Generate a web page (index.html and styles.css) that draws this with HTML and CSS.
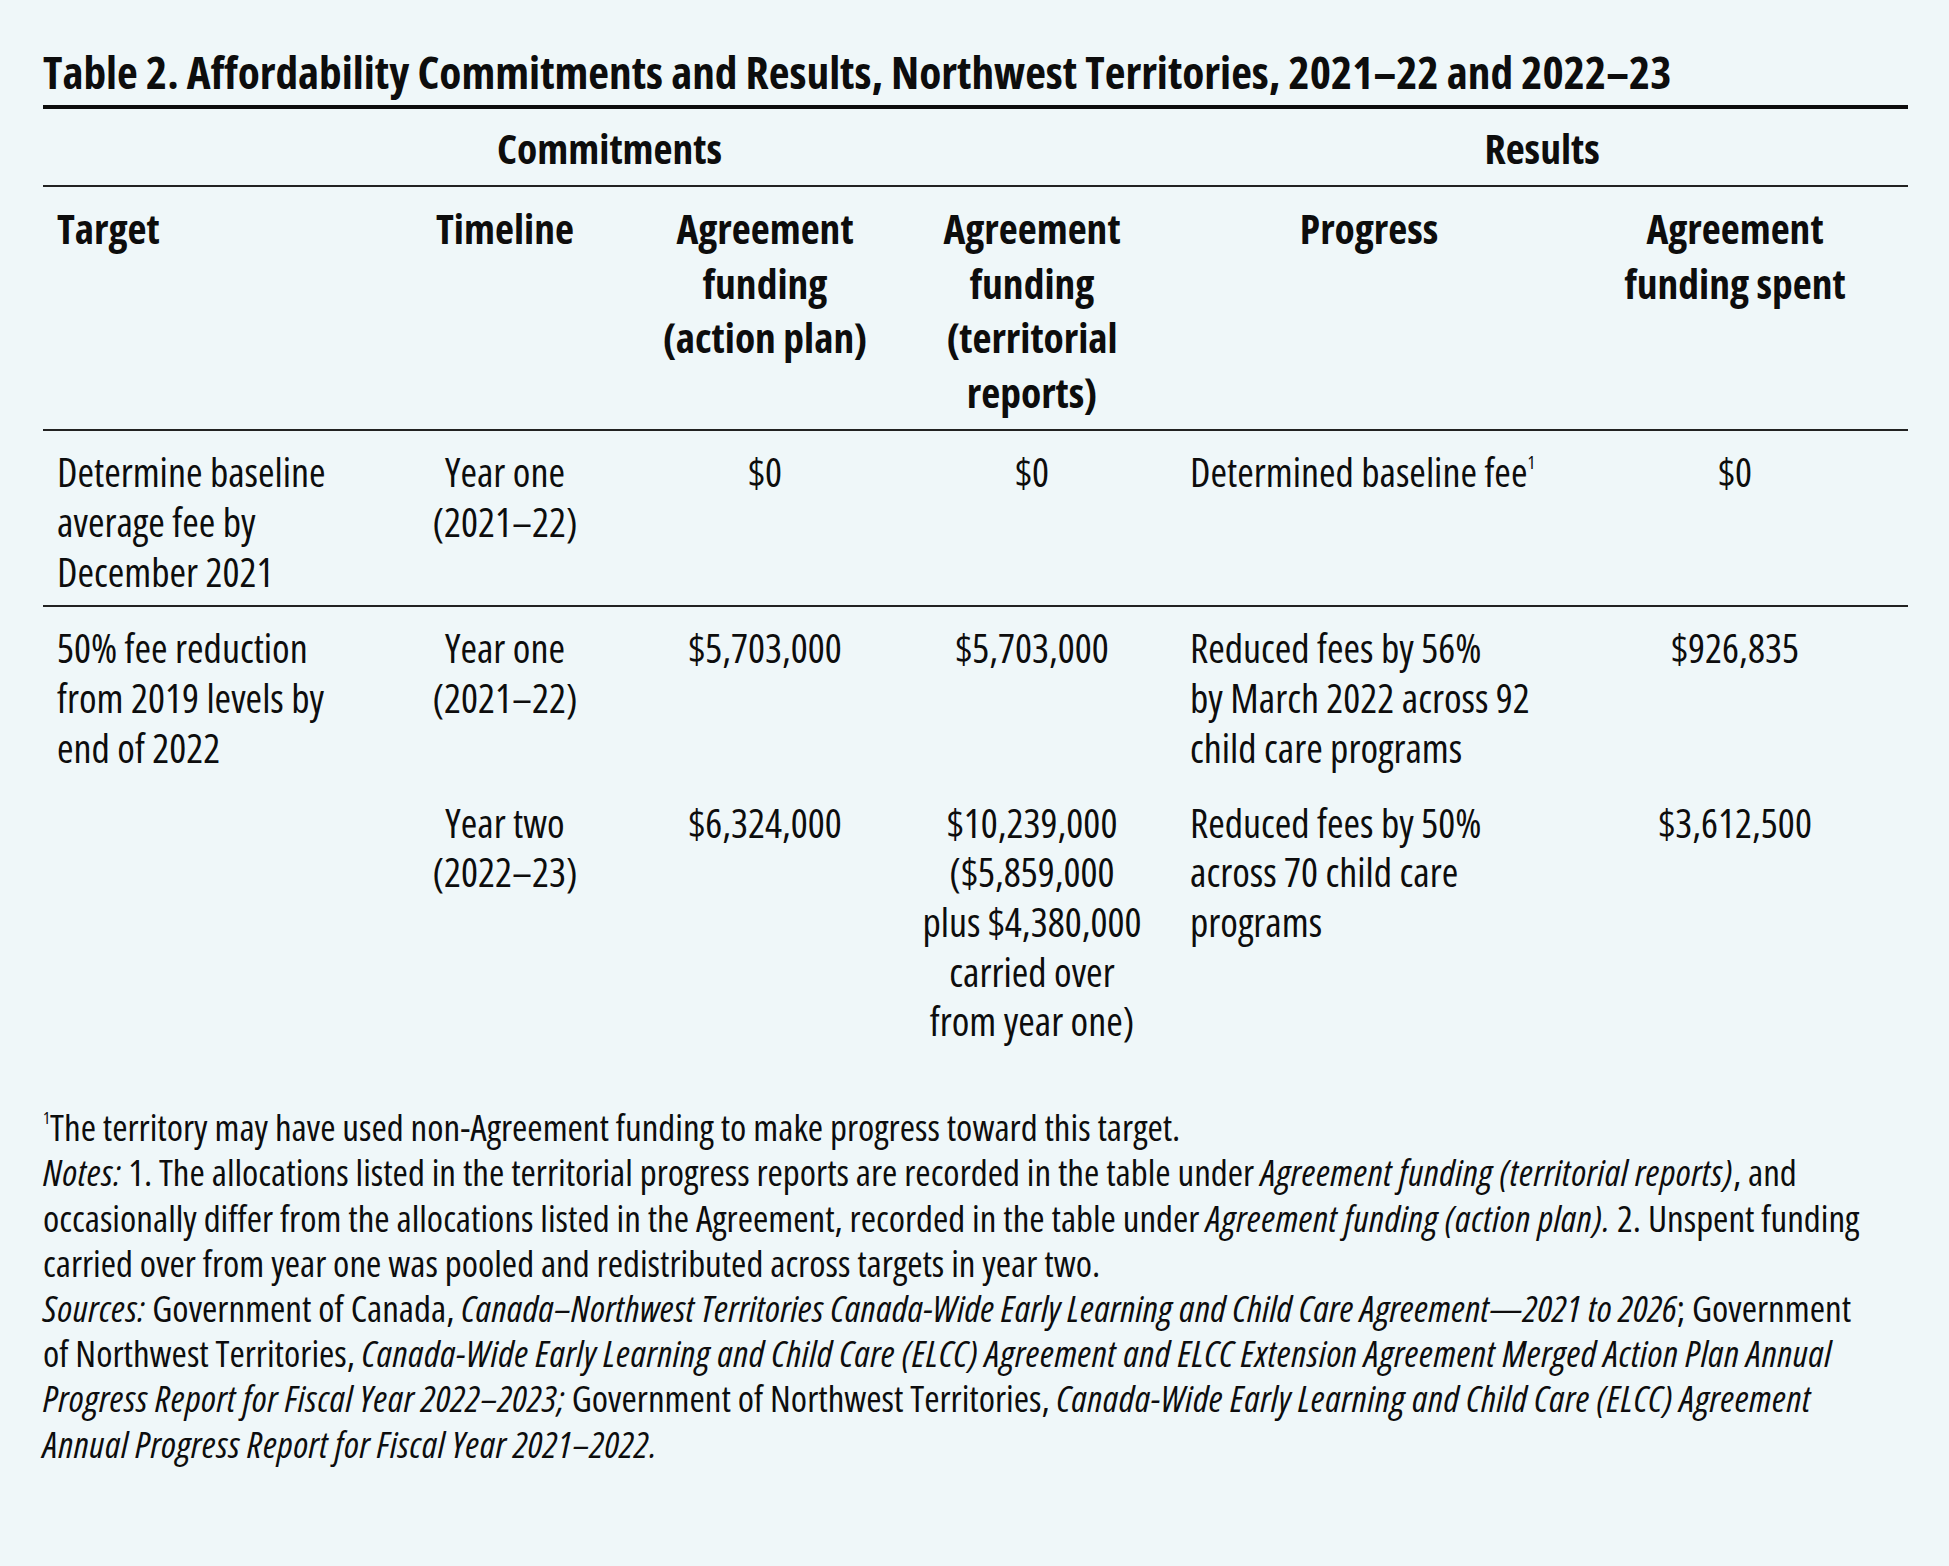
FILE: index.html
```html
<!DOCTYPE html>
<html lang="en">
<head>
<meta charset="utf-8">
<title>Table 2. Affordability Commitments and Results</title>
<link rel="stylesheet" href="styles.css">
</head>
<body>
<main class="page">
  <h1 class="title">Table 2. Affordability Commitments and Results, Northwest Territories, 2021–22 and 2022–23</h1>
  <table class="data">
    <colgroup>
      <col class="c1"><col class="c2"><col class="c3"><col class="c4"><col class="c5"><col class="c6">
    </colgroup>
    <thead>
      <tr class="group">
        <th colspan="4">Commitments</th>
        <th colspan="2">Results</th>
      </tr>
      <tr class="heads">
        <th class="left">Target</th>
        <th>Timeline</th>
        <th>Agreement<br>funding<br>(action plan)</th>
        <th>Agreement<br>funding<br>(territorial<br>reports)</th>
        <th>Progress</th>
        <th>Agreement<br>funding spent</th>
      </tr>
    </thead>
    <tbody>
      <tr class="row sep">
        <td class="left">Determine baseline<br>average fee by<br>December 2021</td>
        <td>Year one<br>(2021–22)</td>
        <td>$0</td>
        <td>$0</td>
        <td class="left">Determined baseline fee<sup>1</sup></td>
        <td>$0</td>
      </tr>
      <tr class="row">
        <td class="left">50% fee reduction<br>from 2019 levels by<br>end of 2022</td>
        <td>Year one<br>(2021–22)</td>
        <td>$5,703,000</td>
        <td>$5,703,000</td>
        <td class="left">Reduced fees by 56%<br>by March 2022 across 92<br>child care programs</td>
        <td>$926,835</td>
      </tr>
      <tr class="row">
        <td class="left"></td>
        <td>Year two<br>(2022–23)</td>
        <td>$6,324,000</td>
        <td>$10,239,000<br>($5,859,000<br>plus $4,380,000<br>carried over<br>from year one)</td>
        <td class="left">Reduced fees by 50%<br>across 70 child care<br>programs</td>
        <td>$3,612,500</td>
      </tr>
    </tbody>
  </table>
  <div class="notes">
    <p><sup>1</sup>The territory may have used non-Agreement funding to make progress toward this target.</p>
    <p><em>Notes:</em> 1. The allocations listed in the territorial progress reports are recorded in the table under <em>Agreement funding (territorial reports)</em>, and<br>occasionally differ from the allocations listed in the Agreement, recorded in the table under <em>Agreement funding (action plan).</em> 2. Unspent funding<br>carried over from year one was pooled and redistributed across targets in year two.</p>
    <p><em>Sources:</em> Government of Canada, <em class="src1">Canada–Northwest Territories Canada-Wide Early Learning and Child Care Agreement—2021 to 2026</em>; Government<br>of Northwest Territories, <em>Canada-Wide Early Learning and Child Care (ELCC) Agreement and ELCC Extension Agreement Merged Action Plan Annual<br>Progress Report for Fiscal Year 2022–2023;</em> Government of Northwest Territories, <em>Canada-Wide Early Learning and Child Care (ELCC) Agreement<br>Annual Progress Report for Fiscal Year 2021–2022.</em></p>
  </div>
</main>
</body>
</html>
```
FILE: styles.css
```css
html, body {
  margin: 0;
  padding: 0;
  background: #eff7f9;
}

body {
  color: #0d0d0d;
  font-family: "Open Sans", "Roboto Condensed", "Liberation Sans", sans-serif;
  font-stretch: 75%;
}

.page {
  padding: 44px 41px 40px 43px;
}

.title {
  margin: 0;
  font-size: 45.3px;
  line-height: 55px;
  font-weight: 700;
  padding-bottom: 6px;
  border-bottom: 4px solid #0d0d0d;
}

.data {
  width: 1865px;
  border-collapse: collapse;
  table-layout: fixed;
}

.c1 { width: 325px; }
.c2 { width: 274px; }
.c3 { width: 246px; }
.c4 { width: 288px; }
.c5 { width: 386px; }
.c6 { width: 346px; }

.data th,
.data td {
  padding-left: 14px;
  padding-right: 14px;
  text-align: center;
  vertical-align: top;
}

.data th {
  font-size: 41.5px;
  font-weight: 700;
}

.group th {
  line-height: 48px;
  padding-top: 15px;
  padding-bottom: 13px;
  border-bottom: 2px solid #222222;
}

.heads th {
  line-height: 54.6px;
  padding-top: 14px;
  padding-bottom: 10px;
  border-bottom: 2px solid #222222;
}

.data td {
  font-size: 40px;
  font-weight: 370;
  line-height: 49.7px;
  padding-top: 16px;
  padding-bottom: 9px;
}

.data .left {
  text-align: left;
}

.sep td {
  border-bottom: 2px solid #222222;
}

sup {
  font-size: 0.45em;
  line-height: 0;
  vertical-align: 1em;
}

.notes {
  margin-top: 49px;
  font-size: 37px;
  font-weight: 370;
  line-height: 45.2px;
}

.notes p {
  margin: 0;
}

.notes em {
  letter-spacing: 0.55px;
}

.notes .src1 {
  letter-spacing: 0.3px;
}

.notes sup {
  font-size: 0.45em;
  vertical-align: 1.05em;
}
```
